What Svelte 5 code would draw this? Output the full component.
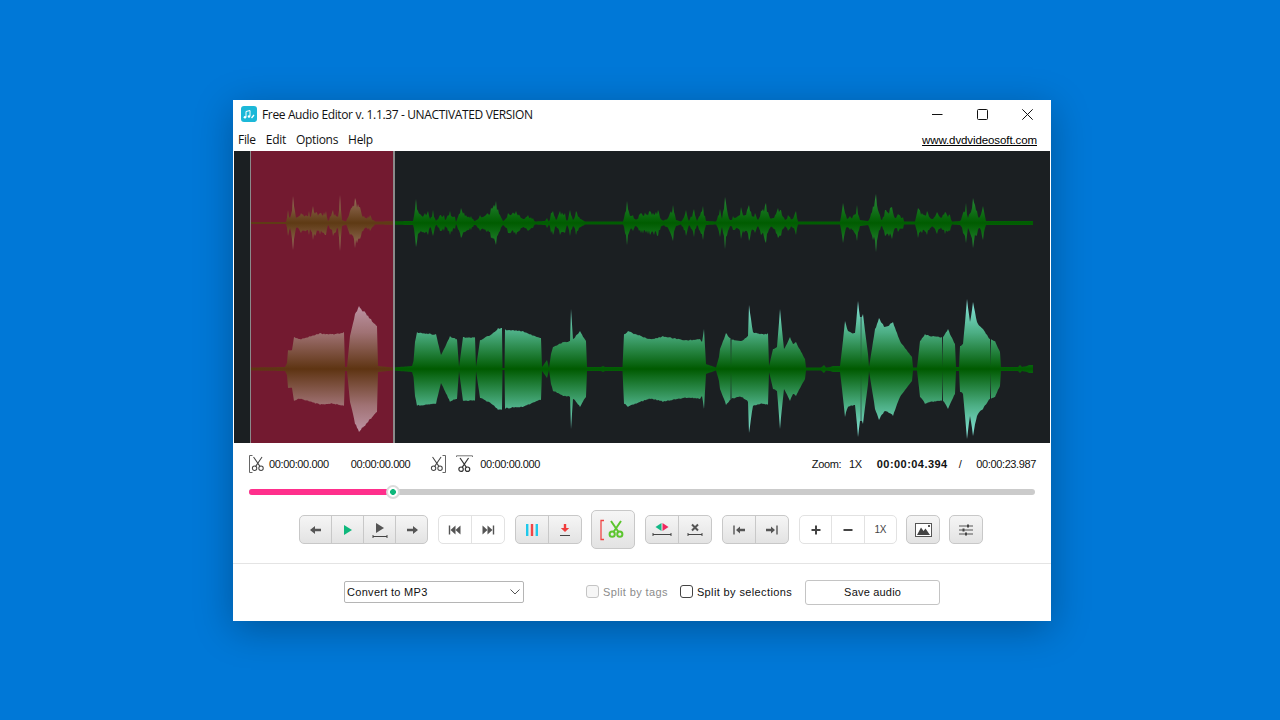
<script>
	// envelope points: [x, amplitude] in page pixels
	const top = [[251,1],[286,1],[288,13],[290,5],[293,27],[296,5],[301,10],[306,8],[309,12],[310,6],[313,17],[316,11],[326,12],[328,2],[333,13],[338,6],[340,28],[342,3],[346,1.5],[350,12],[355,25],[360,16],[365,5],[370,8],[375,1.5],[413,2],[416,24],[420,9],[425,10],[428,12],[430,4],[433,13],[436,2],[440,8],[444,8],[445,3],[450,12],[455,6],[456,1],[461,15],[466,8],[471,7],[475,2],[480,8],[486,8],[491,15],[496,22],[500,8],[503,2],[508,10],[516,12],[523,4],[528,8],[533,5],[535,1.5],[545,2],[547,5],[549,1.5],[551,10],[553,12],[556,3],[560,12],[565,10],[567,2],[570,13],[573,3],[576,12],[581,4],[585,1.5],[623,1.5],[625,10],[627,22],[630,7],[633,8],[636,3],[639,8],[641,10],[650,12],[658,13],[662,3],[668,5],[673,18],[676,3],[681,1.5],[686,13],[689,2],[694,14],[697,2],[703,17],[706,2],[716,1.5],[720,14],[722,4],[725,26],[728,8],[731,3],[733,7],[740,8],[741,16],[745,8],[749,18],[753,7],[755,10],[758,3],[761,12],[766,20],[770,5],[773,5],[778,15],[781,13],[785,3],[788,8],[792,4],[796,12],[798,1.5],[840,1.5],[843,20],[847,4],[850,7],[853,7],[857,18],[860,3],[868,2],[873,17],[876,29],[878,13],[882,3],[885,13],[892,16],[895,5],[898,9],[903,6],[904,1.5],[915,1.5],[918,15],[922,10],[927,12],[933,4],[937,11],[940,6],[945,11],[950,8],[952,1.5],[960,2],[963,10],[966,20],[968,5],[973,25],[977,12],[979,5],[983,17],[986,2],[1033,2]];
	const bottom = [[251,1.5],[285,2],[287,6],[288,19],[292,19],[294,32],[300,30],[320,36],[333,35],[344,37],[345,2],[347,2],[350,33],[355,55],[359,63],[365,57],[371,50],[377,43],[378,3],[393,1.5],[412,3],[413.5,8],[415,27],[417,37],[436,35],[441,14],[450,33],[457,30],[459,2],[463,32],[475,32],[476,2],[480,29],[493,36],[498,41],[502,41],[502.5,1],[504.5,1],[505,40],[523,38],[541,31],[542,2],[547,9],[549,1],[551,15],[553,22],[563,27],[570,28],[571,60],[573,30],[580,38],[586,28],[587,2],[601,2],[603,3],[605,2],[622.5,2],[624,35],[628,38],[650,30],[663,33],[686,29],[700,30],[702,27],[704,40],[706,5],[716,1.5],[719,12],[720,20],[726,36],[730.5,31],[731,3],[731.5,30],[741,28],[748,33],[749,64],[753,37],[763,35],[768,36],[769,3],[773,20],[777,22],[780,60],[784,20],[790,32],[793,25],[796,27],[805,10],[806,1.5],[821,1.5],[824,4],[826,1.5],[830,2],[833,3],[840,3],[842,20],[845,48],[848,38],[855,36],[858,68],[860,52],[860.7,52],[861,2],[861.4,52],[863,55],[868,15],[869,2],[875,40],[879,51],[885,42],[893,47],[900,28],[912,12],[913,1.5],[917,1.5],[920,28],[925,35],[933,33],[942,32],[942.5,1],[943,32],[948,40],[955,25],[956,2],[959,2],[960,23],[963,25],[967,70],[970,47],[973,67],[977,47],[983,40],[990,30],[990.5,3],[991,30],[995,28],[1000,17],[1001,2],[1018,2],[1020,4],[1022,2],[1027,3],[1029,4],[1033,4]];

	const hash = (x) => {
		const s = Math.sin(x * 127.1) * 43758.5453;
		return s - Math.floor(s);
	};

	// fill in 1px steps and roughen the edge a little
	const roughen = (pts, amount, seed) => {
		const out = [];
		for (let i = 0; i < pts.length - 1; i++) {
			const [x0, a0] = pts[i];
			const [x1, a1] = pts[i + 1];
			out.push([x0, a0]);
			for (let x = Math.floor(x0) + 1; x < x1; x++) {
				const a = a0 + ((a1 - a0) * (x - x0)) / (x1 - x0);
				out.push([x, a > 3 ? a * (1 - amount * hash(x + seed)) : a]);
			}
		}
		out.push(pts[pts.length - 1]);
		return out;
	};

	const envelope = (pts, cy, amount) => {
		const up = roughen(pts, amount, 0).map(([x, a]) => `${x},${cy - a}`);
		const down = roughen(pts, amount, 7.3).reverse().map(([x, a]) => `${x},${cy + a}`);
		return up.concat(down).join(' ');
	};
	const topPoints = envelope(top, 223, 0.38);
	const bottomPoints = envelope(bottom, 369, 0.03);

	let duration = 23.987;
	let position = 4.394;
	const progress = (position / duration) * 100;
</script>

{#snippet scissors(color, w)}
	<g fill="none" stroke={color} stroke-width={w}>
		<path d="M3 0 10.5 11M13 0 5.5 11" />
		<circle cx="4.2" cy="13.2" r="2.6" />
		<circle cx="11.8" cy="13.2" r="2.6" />
	</g>
{/snippet}

<div class="desktop">
	<div class="window">
		<div class="titlebar">
			<svg class="app-icon" width="16" height="16" viewBox="0 0 16 16">
				<rect width="16" height="16" rx="3" fill="#1cb8d8" />
				<path d="M5 5.5 9 4.5V10M5 5.5V11" fill="none" stroke="#fff" stroke-width="1" />
				<circle cx="4" cy="11.3" r="1.3" fill="#fff" />
				<circle cx="8" cy="10.5" r="1.3" fill="#fff" />
				<path d="M10.5 12 13 9" stroke="#fff" stroke-width="1.3" />
			</svg>
			<span class="title">Free Audio Editor v. 1.1.37 - UNACTIVATED VERSION</span>
			<div class="win-controls">
				<svg width="11" height="11" viewBox="0 0 11 11"><path d="M0 5.5H10.500" stroke="#111" /></svg>
				<svg width="11" height="11" viewBox="0 0 11 11"><rect x=".5" y=".5" width="10" height="10" rx="1" fill="none" stroke="#111" /></svg>
				<svg width="11" height="11" viewBox="0 0 11 11"><path d="M.3.3 10.7 10.700M10.700.3.3 10.700" stroke="#111" /></svg>
			</div>
		</div>

		<div class="menubar">
			<span>File</span>
			<span>Edit</span>
			<span>Options</span>
			<span>Help</span>
			<a class="site" href="#top">www.dvdvideosoft.com</a>
		</div>

		<svg class="wave" width="816" height="292" viewBox="234 151 816 292">
			<defs>
				<linearGradient id="gt" gradientUnits="userSpaceOnUse" x1="0" x2="0" y1="193" y2="253">
					<stop offset="0" stop-color="#2f8f42" />
					<stop offset=".5" stop-color="#005c00" />
					<stop offset="1" stop-color="#2f8f42" />
				</linearGradient>
				<linearGradient id="gts" gradientUnits="userSpaceOnUse" x1="0" x2="0" y1="193" y2="253">
					<stop offset="0" stop-color="#a07a68" />
					<stop offset=".5" stop-color="#5e3a14" />
					<stop offset="1" stop-color="#a07a68" />
				</linearGradient>
				<linearGradient id="gb" gradientUnits="userSpaceOnUse" x1="0" x2="0" y1="299" y2="439">
					<stop offset="0" stop-color="#8ceae4" />
					<stop offset=".24" stop-color="#4cae84" />
					<stop offset=".5" stop-color="#005a00" />
					<stop offset=".76" stop-color="#4cae84" />
					<stop offset="1" stop-color="#8ceae4" />
				</linearGradient>
				<linearGradient id="gbs" gradientUnits="userSpaceOnUse" x1="0" x2="0" y1="299" y2="439">
					<stop offset="0" stop-color="#c49cb0" />
					<stop offset=".24" stop-color="#a07274" />
					<stop offset=".5" stop-color="#5e3412" />
					<stop offset=".76" stop-color="#a07274" />
					<stop offset="1" stop-color="#c49cb0" />
				</linearGradient>
				<clipPath id="sel"><rect x="250" y="151" width="144" height="292" /></clipPath>
				<clipPath id="unsel"><rect x="394" y="151" width="656" height="292" /></clipPath>
			</defs>
			<rect x="234" y="151" width="816" height="292" fill="#1b1f22" />
			<rect x="250" y="151" width="144" height="292" fill="#731a30" />
			<g clip-path="url(#unsel)">
				<polygon points={topPoints} fill="url(#gt)" />
				<polygon points={bottomPoints} fill="url(#gb)" />
			</g>
			<g clip-path="url(#sel)">
				<polygon points={topPoints} fill="url(#gts)" />
				<polygon points={bottomPoints} fill="url(#gbs)" />
			</g>
			<rect x="250" y="151" width="1" height="292" fill="#8a8a8a" />
			<rect x="393" y="151" width="2" height="292" fill="#8a8a8a" />
		</svg>

		<div class="times">
			<svg width="17" height="18" viewBox="0 0 17 18">
				<path d="M3.5 .5H.5V17.500H3.500" fill="none" stroke="#666" />
				<g transform="translate(2 2) scale(.85)">{@render scissors('#444', 1.2)}</g>
			</svg>
			<span class="t t1">00:00:00.000</span>
			<span class="t t2">00:00:00.000</span>
			<svg class="ic-end" width="17" height="18" viewBox="0 0 17 18">
				<path d="M12.500 .5H15.500V17.500H12.500" fill="none" stroke="#666" />
				<g transform="translate(0 2) scale(.85)">{@render scissors('#444', 1.2)}</g>
			</svg>
			<svg class="ic-len" width="17" height="18" viewBox="0 0 17 18">
				<path d="M.5 2V.8H16.500V2" fill="none" stroke="#777" />
				<g transform="translate(1.500 3) scale(.85)">{@render scissors('#333', 1.4)}</g>
			</svg>
			<span class="t t3">00:00:00.000</span>
			<div class="right">
				<span class="t">Zoom:</span>
				<span class="t z">1X</span>
				<b class="t now">00:00:04.394</b>
				<span class="t sl">/</span>
				<span class="t total">00:00:23.987</span>
			</div>
		</div>

		<div class="slider">
			<div class="track">
				<div class="fill" style="width: {progress}%"></div>
				<span class="thumb" style="left: {progress}%"></span>
			</div>
		</div>

		<div class="toolbar">
			<div class="grp gray w4">
				<button aria-label="Back"><svg width="14" height="14" viewBox="0 0 14 14"><polygon points="1,7 6,3 6,5.800 12,5.800 12,8.200 6,8.200 6,11" fill="#555" /></svg></button>
				<button aria-label="Play"><svg width="14" height="14" viewBox="0 0 14 14"><polygon points="3,2 11,7 3,12" fill="#0fb87c" /></svg></button>
				<button aria-label="Play selection"><svg width="16" height="16" viewBox="0 0 16 16"><polygon points="4,1 12,6 4,11" fill="#555" /><path d="M1 14.500H15M1 13V16M15 13V16" stroke="#444" fill="none" /></svg></button>
				<button aria-label="Forward"><svg width="14" height="14" viewBox="0 0 14 14"><polygon points="13,7 8,3 8,5.800 2,5.800 2,8.200 8,8.200 8,11" fill="#555" /></svg></button>
			</div>
			<div class="grp white w2">
				<button aria-label="Previous"><svg width="14" height="14" viewBox="0 0 14 14"><path d="M1.500 2.500V11.500" stroke="#555" stroke-width="1.400" /><polygon points="2.500,7 7.500,2.500 7.500,11.500" fill="#555" /><polygon points="7.500,7 12.500,2.500 12.500,11.500" fill="#555" /></svg></button>
				<button aria-label="Next"><svg width="14" height="14" viewBox="0 0 14 14"><path d="M12.500 2.500V11.500" stroke="#555" stroke-width="1.400" /><polygon points="11.500,7 6.500,2.500 6.500,11.500" fill="#555" /><polygon points="6.500,7 1.500,2.500 1.500,11.500" fill="#555" /></svg></button>
			</div>
			<div class="grp gray w2">
				<button aria-label="Split"><svg width="14" height="14" viewBox="0 0 14 14"><rect x="1" y="1" width="2.400" height="12" fill="#1fc8ea" /><rect x="5.800" y="1" width="2.400" height="12" fill="#f04545" /><rect x="10.600" y="1" width="2.400" height="12" fill="#1fc8ea" /></svg></button>
				<button aria-label="Add marker"><svg width="14" height="14" viewBox="0 0 14 14"><polygon points="7,9 2.800,5 5.800,5 5.800,1 8.200,1 8.200,5 11.200,5" fill="#f03c3c" /><path d="M2 12.500H12" stroke="#444" /></svg></button>
			</div>
			<button class="big" aria-label="Cut">
				<svg width="26" height="24" viewBox="0 0 26 24">
					<path d="M4 2.500H1V21.500H4" fill="none" stroke="#f04545" stroke-width="1.300" />
					<g transform="translate(8 3)">{@render scissors('#5cc52e', 2)}</g>
				</svg>
			</button>
			<div class="grp gray w2">
				<button aria-label="Split channels"><svg width="20" height="16" viewBox="0 0 20 16"><polygon points="9.500,1 9.500,9 3.500,5" fill="#12b886" /><polygon points="10.500,1 10.500,9 16.500,5" fill="#f0285f" /><path d="M1 12.500H19M1 11V14M19 11V14" stroke="#444" fill="none" /></svg></button>
				<button aria-label="Delete selection"><svg width="16" height="16" viewBox="0 0 16 16"><path d="M5 2.500 11 8.500M11 2.500 5 8.500" stroke="#555" stroke-width="2" /><path d="M1 12.500H15M1 11V14M15 11V14" stroke="#444" fill="none" /></svg></button>
			</div>
			<div class="grp gray w2">
				<button aria-label="Go to start"><svg width="14" height="14" viewBox="0 0 14 14"><path d="M2 2.500V11.500" stroke="#555" stroke-width="1.400" /><polygon points="4,7 8,3.500 8,5.800 13,5.800 13,8.200 8,8.200 8,10.500" fill="#555" /></svg></button>
				<button aria-label="Go to end"><svg width="14" height="14" viewBox="0 0 14 14"><path d="M12 2.500V11.500" stroke="#555" stroke-width="1.400" /><polygon points="10,7 6,3.500 6,5.800 1,5.800 1,8.200 6,8.200 6,10.500" fill="#555" /></svg></button>
			</div>
			<div class="grp white w3">
				<button aria-label="Zoom in"><svg width="12" height="12" viewBox="0 0 12 12"><path d="M6 1.500V10.500M1.500 6H10.500" stroke="#444" stroke-width="2" /></svg></button>
				<button aria-label="Zoom out"><svg width="12" height="12" viewBox="0 0 12 12"><path d="M1.500 6H10.500" stroke="#444" stroke-width="2" /></svg></button>
				<button class="one">1X</button>
			</div>
			<button class="single" aria-label="Image">
				<svg width="17" height="14" viewBox="0 0 17 14"><rect x=".5" y=".5" width="16" height="13" fill="#fff" stroke="#555" /><polygon points="2,12 6,4.500 8.500,8 10.500,5.500 15,12" fill="#444" /><rect x="13" y="2" width="2" height="2" fill="#555" /></svg>
			</button>
			<button class="single" aria-label="Settings">
				<svg width="14" height="12" viewBox="0 0 14 12"><path d="M0 2H14M0 6H14M0 10H14" stroke="#555" /><rect x="8" y=".5" width="2" height="3" fill="#444" /><rect x="3.500" y="4.500" width="2" height="3" fill="#444" /><rect x="6" y="8.500" width="2" height="3" fill="#444" /></svg>
			</button>
		</div>

		<div class="footer">
			<div class="select">
				<span>Convert to MP3</span>
				<svg width="10" height="6" viewBox="0 0 10 6"><path d="M.5.500 5 5 9.500.5" fill="none" stroke="#555" /></svg>
			</div>
			<label class="check off"><input type="checkbox" disabled /><span>Split by tags</span></label>
			<label class="check"><input type="checkbox" /><span>Split by selections</span></label>
			<button class="save">Save audio</button>
		</div>
	</div>
</div>

<style>
	:global(body) {
		margin: 0;
		background: #0078d7;
	}

	.desktop {
		height: 720px;
		box-sizing: border-box;
		padding: 100px 0 0 233px;
		overflow: hidden;
	}

	.window {
		width: 818px;
		height: 521px;
		background: #fff;
		box-shadow: 0 8px 36px rgba(0, 0, 0, 0.28);
		display: flex;
		flex-direction: column;
		font-family: "Liberation Sans", sans-serif;
		color: #111;
	}

	.titlebar {
		height: 30px;
		display: flex;
		align-items: center;
		padding: 0 0 2px 8px;
		box-sizing: border-box;
	}

	.title {
		margin-left: 5px;
		font-family: "Open Sans", sans-serif;
		font-size: 12px;
		letter-spacing: -0.36px;
	}

	.win-controls {
		margin-left: auto;
		display: flex;
		gap: 34px;
		padding-right: 18px;
	}

	.menubar {
		height: 21px;
		display: flex;
		align-items: center;
		gap: 10px;
		padding: 0 14px 2px 5px;
		box-sizing: border-box;
		font-family: "Open Sans", sans-serif;
		font-size: 12px;
		letter-spacing: -0.3px;
	}

	.site {
		margin-left: auto;
		font-family: "Liberation Sans", sans-serif;
		font-size: 11.5px;
		letter-spacing: -0.1px;
		color: #000;
	}

	.wave {
		display: block;
		margin-left: 1px;
	}

	.times {
		height: 41px;
		display: flex;
		align-items: center;
		padding: 1px 15px 0 16px;
		box-sizing: border-box;
	}

	.t {
		font-size: 11px;
		letter-spacing: -0.38px;
		color: #111;
		white-space: nowrap;
	}

	.t1 { margin-left: 3px; }
	.t2 { margin-left: 22px; }
	.ic-end { margin-left: 20px; }
	.ic-len { margin-left: 9px; }
	.t3 { margin-left: 7px; }

	.right {
		margin-left: auto;
		display: flex;
		align-items: center;
	}

	.z { margin-left: 8px; }

	.now {
		margin-left: 15px;
		letter-spacing: 0.45px;
	}

	.sl { margin-left: 11px; }
	.total { margin-left: 15px; }

	.slider {
		padding: 5px 16px 0;
		height: 6px;
	}

	.track {
		position: relative;
		height: 6px;
		border-radius: 3px;
		background: #cbcbcb;
	}

	.fill {
		height: 100%;
		border-radius: 3px 0 0 3px;
		background: #ff2f8c;
	}

	.thumb {
		position: absolute;
		top: -4px;
		width: 14px;
		height: 14px;
		margin-left: -7px;
		box-sizing: border-box;
		border-radius: 50%;
		border: 2px solid #dcdcdc;
		background: radial-gradient(circle, #0fb87c 0 2.6px, #fff 3.2px);
	}

	.toolbar {
		display: flex;
		align-items: center;
		gap: 10px;
		height: 39px;
		margin-top: 15px;
		padding-left: 66px;
	}

	button {
		font-family: "Liberation Sans", sans-serif;
		padding: 0;
		margin: 0;
	}

	.grp {
		display: flex;
		height: 29px;
		border-radius: 5px;
		box-sizing: border-box;
		overflow: hidden;
	}

	.w4 { width: 129px; }
	.w3 { width: 98px; }
	.w2 { width: 67px; }

	.grp button {
		flex: 1;
		height: 100%;
		border: none;
		background: none;
		display: flex;
		align-items: center;
		justify-content: center;
	}

	.grp.gray {
		border: 1px solid #c8c8c8;
		background: linear-gradient(#f5f5f5, #e3e3e3);
	}

	.grp.gray button + button { border-left: 1px solid #c8c8c8; }

	.grp.white {
		border: 1px solid #e2e2e2;
		background: #fff;
	}

	.grp.white button + button { border-left: 1px solid #e2e2e2; }

	.one {
		font-size: 10px;
		letter-spacing: -0.2px;
		color: #444;
	}

	.big {
		width: 44px;
		height: 39px;
		margin-left: -1px;
		border: 1px solid #c8c8c8;
		border-radius: 5px;
		background: linear-gradient(#f5f5f5, #e3e3e3);
		display: flex;
		align-items: center;
		justify-content: center;
	}

	.single {
		width: 34px;
		height: 29px;
		margin-left: -1px;
		box-sizing: border-box;
		border: 1px solid #c8c8c8;
		border-radius: 5px;
		background: linear-gradient(#f5f5f5, #e3e3e3);
		display: flex;
		align-items: center;
		justify-content: center;
	}

	.footer {
		margin-top: 14px;
		flex: 1;
		border-top: 1px solid #e4e4e4;
		display: flex;
		align-items: center;
		padding: 0 0 2px 111px;
		font-size: 11px;
	}

	.select {
		width: 180px;
		height: 22px;
		box-sizing: border-box;
		border: 1px solid #b5b5b5;
		border-radius: 2px;
		display: flex;
		align-items: center;
		justify-content: space-between;
		padding: 0 3px 0 2px;
		letter-spacing: 0.3px;
	}

	.check {
		display: flex;
		align-items: center;
		gap: 4px;
		letter-spacing: 0.38px;
	}

	.check.off {
		margin-left: 62px;
		color: #8c8c8c;
	}

	.check:not(.off) { margin-left: 12px; }

	.check input {
		appearance: none;
		width: 13px;
		height: 13px;
		margin: 0;
		border: 1px solid #444;
		border-radius: 3px;
		background: #fff;
	}

	.check input:disabled {
		border-color: #c4c4c4;
		background: #f6f6f6;
	}

	.save {
		margin: 1px 0 0 13px;
		width: 135px;
		height: 25px;
		background: #fff;
		border: 1px solid #c4c4c4;
		border-radius: 3px;
		font-size: 11px;
		letter-spacing: 0.2px;
		color: #111;
	}
</style>
